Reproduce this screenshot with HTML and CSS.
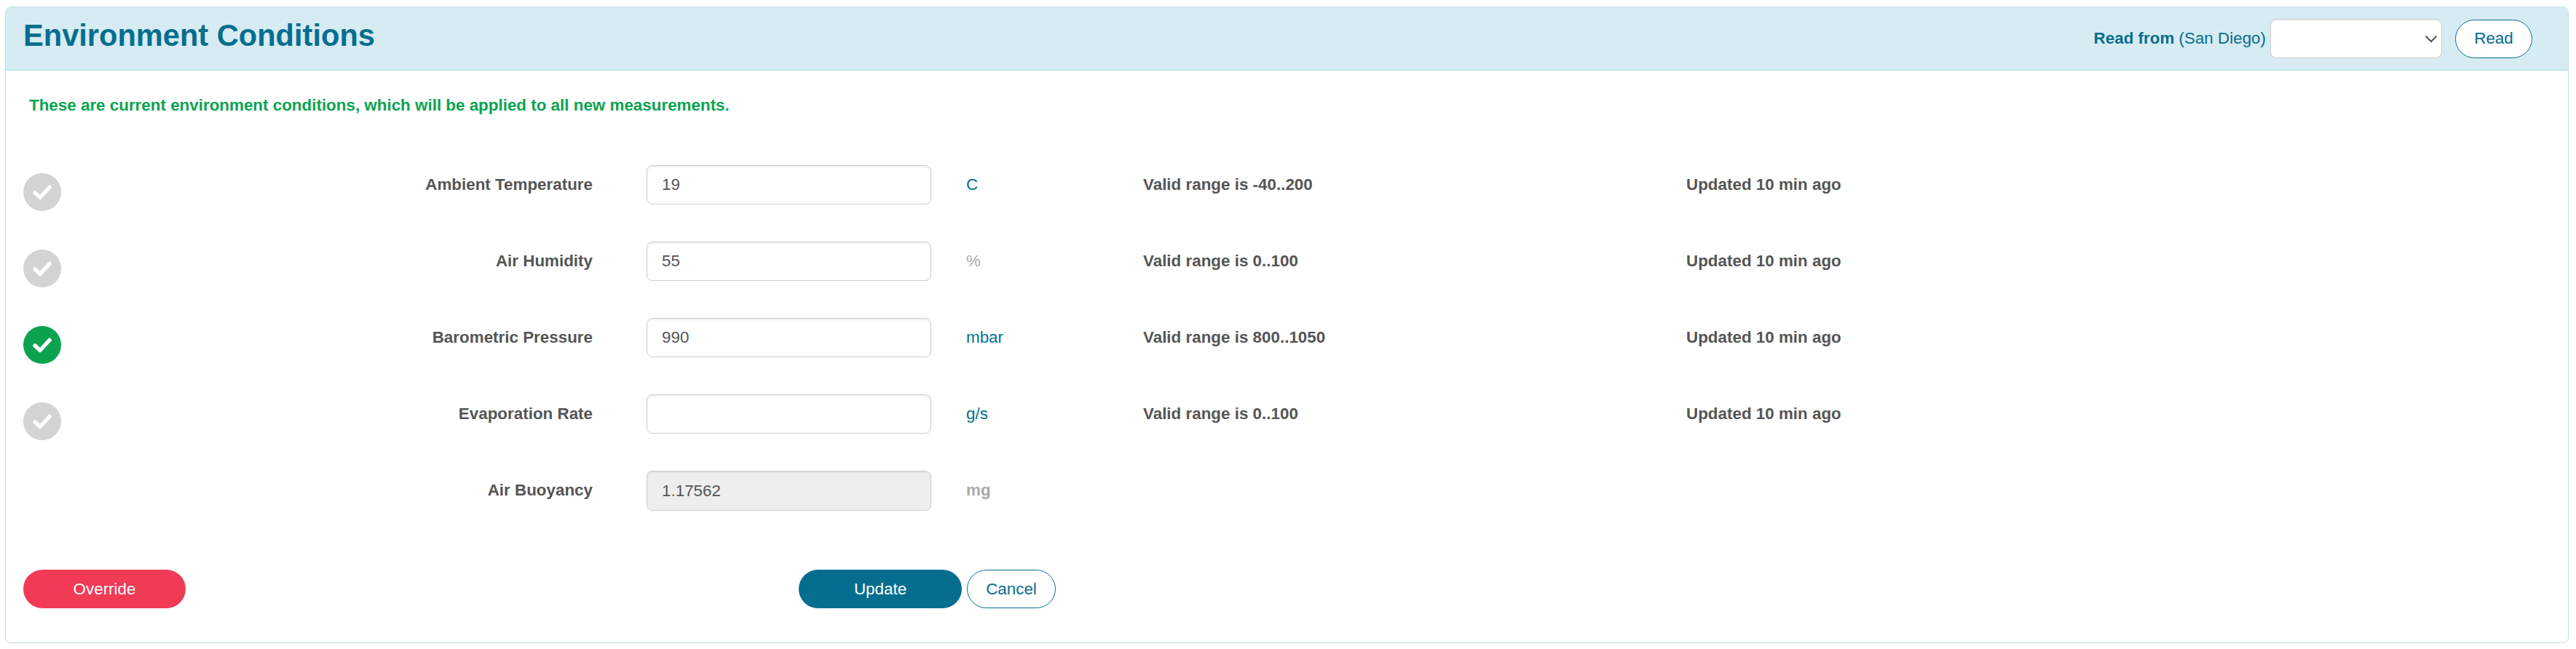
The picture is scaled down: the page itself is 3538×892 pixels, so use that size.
FILE: index.html
```html
<!DOCTYPE html>
<html lang="en">
<head>
<meta charset="utf-8">
<title>Environment Conditions</title>
<link rel="stylesheet" href="styles.css">
</head>
<body>
<section class="card">
  <header class="card-head">
    <h1 class="title">Environment Conditions</h1>
    <div class="read-from">
      <span class="read-label"><b>Read from</b> (San Diego)</span>
      <span class="select-wrap">
        <select class="read-select" aria-label="Read from"><option></option></select>
        <svg class="chevron" viewBox="0 0 18 11"><path d="M1.500 1.500L9 9l7.500-7.500"/></svg>
      </span>
      <button class="btn btn-outline btn-read" type="button">Read</button>
    </div>
  </header>
  <div class="card-body">
    <p class="notice">These are current environment conditions, which will be applied to all new measurements.</p>
    <div class="rows">
      <div class="row">
        <span class="status"><svg viewBox="0 0 52 52" class="check"><path d="M16 27l7 6.500 13-14"/></svg></span>
        <label class="label">Ambient Temperature</label>
        <input class="field" type="text" value="19">
        <span class="unit">C</span>
        <span class="info">Valid range is -40..200</span>
        <span class="info">Updated 10 min ago</span>
      </div>
      <div class="row">
        <span class="status"><svg viewBox="0 0 52 52" class="check"><path d="M16 27l7 6.500 13-14"/></svg></span>
        <label class="label">Air Humidity</label>
        <input class="field" type="text" value="55">
        <span class="unit unit-muted">%</span>
        <span class="info">Valid range is 0..100</span>
        <span class="info">Updated 10 min ago</span>
      </div>
      <div class="row">
        <span class="status status-on"><svg viewBox="0 0 52 52" class="check"><path d="M16 27l7 6.500 13-14"/></svg></span>
        <label class="label">Barometric Pressure</label>
        <input class="field" type="text" value="990">
        <span class="unit">mbar</span>
        <span class="info">Valid range is 800..1050</span>
        <span class="info">Updated 10 min ago</span>
      </div>
      <div class="row">
        <span class="status"><svg viewBox="0 0 52 52" class="check"><path d="M16 27l7 6.500 13-14"/></svg></span>
        <label class="label">Evaporation Rate</label>
        <input class="field" type="text" value="">
        <span class="unit">g/s</span>
        <span class="info">Valid range is 0..100</span>
        <span class="info">Updated 10 min ago</span>
      </div>
      <div class="row">
        <span></span>
        <label class="label">Air Buoyancy</label>
        <input class="field field-readonly" type="text" value="1.17562" readonly>
        <span class="unit unit-muted unit-bold">mg</span>
      </div>
    </div>
    <div class="actions">
      <button class="btn btn-danger" type="button">Override</button>
      <div class="actions-main">
        <button class="btn btn-primary" type="button">Update</button>
        <button class="btn btn-outline btn-cancel" type="button">Cancel</button>
      </div>
    </div>
  </div>
</section>
</body>
</html>
```
FILE: styles.css
```css
* { box-sizing: border-box; }
html, body { margin: 0; padding: 0; background: #fff; }
body {
  padding: 9px 10px 8px 7px;
  font-family: "Liberation Sans", Arial, sans-serif;
  font-size: 22.4px;
  color: #555;
}
.card {
  height: 875px;
  border: 1px solid #c3dde3;
  border-radius: 8px;
  background: #fff;
  overflow: hidden;
}
.card-head {
  height: 87px;
  background: #d7ebf2;
  border-bottom: 2px solid #bde6ee;
  display: flex;
  align-items: flex-start;
  justify-content: space-between;
  padding: 16px 49px 0 24px;
}
.title {
  margin: 0;
  font-size: 41.6px;
  line-height: 46px;
  font-weight: 700;
  color: #056e8f;
}
.read-from { display: flex; align-items: center; gap: 6px; }
.read-label { color: #056e8f; line-height: 54px; }
.select-wrap { position: relative; display: flex; }
.read-select {
  appearance: none;
  width: 236px;
  height: 54px;
  border: 1px solid #ccc;
  border-radius: 8px;
  background-color: #fff;
  font: inherit;
  color: #555;
  box-shadow: inset 0 2px 2px rgba(0,0,0,.06);
}
.chevron {
  position: absolute;
  top: 22px;
  right: 6px;
  width: 18px;
  height: 11px;
  pointer-events: none;
}
.chevron path { fill: none; stroke: #555; stroke-width: 2; }
.btn {
  height: 53px;
  border-radius: 27px;
  font: inherit;
  padding: 0;
  cursor: pointer;
}
.btn-outline { background: #fff; border: 1px solid #056e8f; color: #056e8f; }
.btn-read { width: 106px; margin-left: 12px; }
.btn-cancel { width: 122px; }
.btn-danger { width: 223px; background: #f03a56; border: 0; color: #fff; }
.btn-primary { width: 224px; background: #056e8f; border: 0; color: #fff; }
.card-body { padding: 0 0 0 24px; }
.notice {
  margin: 0;
  padding: 35px 0 0 8px;
  font-weight: 700;
  line-height: 26px;
  color: #0ba350;
}
.rows {
  margin-top: 69px;
  display: flex;
  flex-direction: column;
  gap: 51px;
}
.row {
  display: grid;
  grid-template-columns: 52px 804px 391px 291px 746px auto;
  grid-template-rows: 54px;
  align-items: center;
  justify-content: start;
  font-weight: 700;
}
.status {
  width: 52px;
  height: 52px;
  align-self: start;
  margin-top: 11px;
  border-radius: 50%;
  background: #d3d3d3;
  display: flex;
}
.status-on { background: #0ba350; }
.check { width: 52px; height: 52px; }
.check path { fill: none; stroke: #fff; stroke-width: 5.500; stroke-linecap: round; stroke-linejoin: round; }
.label { text-align: right; margin-right: 74px; }
.field {
  width: 391px;
  height: 54px;
  border: 1px solid #ccc;
  border-radius: 8px;
  padding: 0 20px;
  background: #fff;
  font: 400 22.4px/1 "Liberation Sans", Arial, sans-serif;
  color: #555;
  box-shadow: inset 0 2px 2px rgba(0,0,0,.06);
  outline: 0;
}
.field-readonly { background: #eee; height: 55px; align-self: start; }
.unit { font-weight: 400; color: #056e8f; padding-left: 48px; }
.unit-muted { color: #aaa; }
.unit-bold { font-weight: 700; }
.info { font-weight: 700; color: #555; }
.actions {
  margin-top: 82px;
  display: flex;
  gap: 842px;
}
.actions-main { display: flex; gap: 7px; }
```
